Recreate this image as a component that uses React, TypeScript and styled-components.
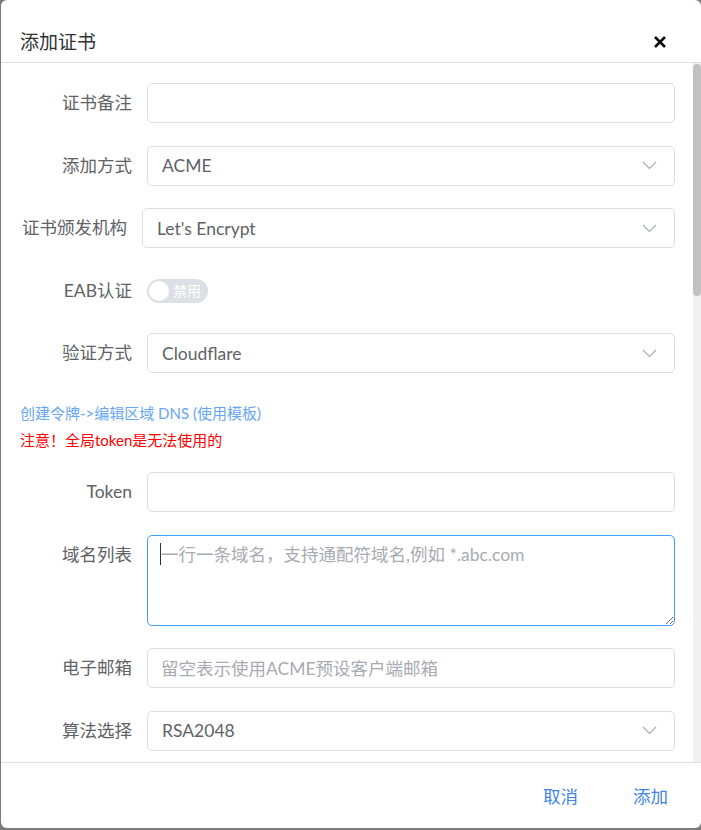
import React from "react";
import styled, { createGlobalStyle } from "styled-components";

const GlobalStyle = createGlobalStyle`
  html, body {
    margin: 0;
    padding: 0;
    background: #7b7b7b;
    font-family: Lato, "Noto Sans CJK SC", sans-serif;
  }
`;

const Dialog = styled.div`
  margin-left: 1px;
  width: 700px;
  height: 828px;
  background: #ffffff;
  border-radius: 6px;
  display: flex;
  flex-direction: column;
  overflow: hidden;
`;

const Header = styled.div`
  height: 63px;
  box-sizing: border-box;
  flex-shrink: 0;
  display: flex;
  align-items: center;
  justify-content: space-between;
  padding: 22px 34px 0 19px;
  border-bottom: 1px solid #dcdfe6;
`;

const Title = styled.span`
  font-size: 19px;
  color: #303133;
  line-height: 24px;
`;

const CloseButton = styled.button`
  border: none;
  background: none;
  padding: 0;
  width: 14px;
  height: 14px;
  display: flex;
  cursor: pointer;
`;

const Body = styled.div`
  flex: 1;
  min-height: 0;
  display: flex;
`;

const Content = styled.div`
  flex: 1;
  min-width: 0;
  overflow: hidden;
  padding: 20px 18px 0 19px;
`;

const ScrollTrack = styled.div`
  width: 8px;
  flex-shrink: 0;
  background: #f1f1f1;
`;

const ScrollThumb = styled.div`
  height: 232px;
  margin-top: 1px;
  border-radius: 4px;
  background: #c1c1c1;
`;

const Row = styled.div`
  display: flex;
  align-items: flex-start;
  margin-bottom: 22.5px;
`;

const Label = styled.label<{ $width?: number }>`
  width: ${(p) => p.$width ?? 127}px;
  flex-shrink: 0;
  box-sizing: border-box;
  padding-right: 15px;
  text-align: right;
  white-space: nowrap;
  font-size: 17.5px;
  line-height: 40px;
  color: #606266;
`;

const Field = styled.div`
  flex: 1;
  min-width: 0;
`;

const Input = styled.input`
  display: block;
  width: 100%;
  height: 40px;
  box-sizing: border-box;
  border: 1px solid #dcdfe6;
  border-radius: 5px;
  padding: 0 13px;
  font-family: inherit;
  font-size: 17.5px;
  color: #606266;
  outline: none;
  &::placeholder {
    color: #a8abb2;
  }
`;

const SelectBox = styled.div`
  height: 40px;
  box-sizing: border-box;
  border: 1px solid #dcdfe6;
  border-radius: 5px;
  padding: 0 17px 0 14px;
  display: flex;
  align-items: center;
  justify-content: space-between;
  font-size: 17.5px;
  color: #606266;
`;

const TextAreaWrap = styled.div`
  position: relative;
  &::before {
    content: "";
    position: absolute;
    left: 13px;
    top: 8px;
    width: 1px;
    height: 22px;
    background: #303133;
  }
`;

const TextArea = styled.textarea`
  display: block;
  width: 100%;
  height: 91px;
  box-sizing: border-box;
  border: 1px solid #409eff;
  border-radius: 5px;
  padding: 6px 13px;
  font-family: inherit;
  font-size: 17.5px;
  line-height: 26px;
  color: #606266;
  outline: none;
  resize: vertical;
  &::placeholder {
    color: #a8abb2;
  }
`;

const SwitchRow = styled.div`
  height: 40px;
  display: flex;
  align-items: center;
`;

const Switch = styled.div<{ $on: boolean }>`
  width: 61px;
  height: 24px;
  box-sizing: border-box;
  border-radius: 12px;
  background: ${(p) => (p.$on ? "#409eff" : "#dcdfe6")};
  display: flex;
  align-items: center;
  padding: 0 2px;
  gap: 4px;
`;

const Knob = styled.span`
  width: 20px;
  height: 20px;
  border-radius: 50%;
  background: #ffffff;
`;

const SwitchText = styled.span`
  font-size: 14px;
  line-height: 20px;
  color: #ffffff;
`;

const Notes = styled.div`
  padding: 4.5px 0 18px;
  font-size: 15px;
  line-height: 27px;
`;

const Note = styled.div<{ $tone: "link" | "warn" }>`
  color: ${(p) => (p.$tone === "link" ? "#66a6f5" : "#ff0000")};
`;

const Footer = styled.div`
  height: 65px;
  flex-shrink: 0;
  border-top: 1px solid #dcdfe6;
  display: flex;
  align-items: center;
  justify-content: flex-end;
  padding-right: 14px;
  gap: 17px;
`;

const TextButton = styled.button`
  border: none;
  background: none;
  padding: 6px 19px;
  font-family: inherit;
  font-size: 17.5px;
  color: #3f84e6;
  cursor: pointer;
`;

const Chevron = () => (
  <svg width="15" height="9" viewBox="0 0 15 9" fill="none">
    <path d="M1 1l6.5 6.5L14 1" stroke="#a8abb2" strokeWidth="1.1" />
  </svg>
);

const Select = ({ value }: { value: string }) => (
  <SelectBox>
    <span>{value}</span>
    <Chevron />
  </SelectBox>
);

const App = () => {
  return (
    <>
      <GlobalStyle />
      <Dialog>
        <Header>
          <Title>添加证书</Title>
          <CloseButton>
            <svg width="14" height="14" viewBox="0 0 14 14">
              <path d="M2 2l10 10M12 2L2 12" stroke="#111" strokeWidth="2.6" />
            </svg>
          </CloseButton>
        </Header>
        <Body>
          <Content>
            <Row>
              <Label>证书备注</Label>
              <Field>
                <Input />
              </Field>
            </Row>
            <Row>
              <Label>添加方式</Label>
              <Field>
                <Select value="ACME" />
              </Field>
            </Row>
            <Row>
              <Label $width={122}>证书颁发机构</Label>
              <Field>
                <Select value="Let's Encrypt" />
              </Field>
            </Row>
            <Row>
              <Label>EAB认证</Label>
              <Field>
                <SwitchRow>
                  <Switch $on={false}>
                    <Knob />
                    <SwitchText>禁用</SwitchText>
                  </Switch>
                </SwitchRow>
              </Field>
            </Row>
            <Row>
              <Label>验证方式</Label>
              <Field>
                <Select value="Cloudflare" />
              </Field>
            </Row>
            <Notes>
              <Note $tone="link">创建令牌-&gt;编辑区域 DNS (使用模板)</Note>
              <Note $tone="warn">注意！全局token是无法使用的</Note>
            </Notes>
            <Row>
              <Label>Token</Label>
              <Field>
                <Input />
              </Field>
            </Row>
            <Row>
              <Label>域名列表</Label>
              <Field>
                <TextAreaWrap>
                  <TextArea placeholder="一行一条域名，支持通配符域名,例如 *.abc.com" />
                </TextAreaWrap>
              </Field>
            </Row>
            <Row>
              <Label>电子邮箱</Label>
              <Field>
                <Input placeholder="留空表示使用ACME预设客户端邮箱" />
              </Field>
            </Row>
            <Row>
              <Label>算法选择</Label>
              <Field>
                <Select value="RSA2048" />
              </Field>
            </Row>
          </Content>
          <ScrollTrack>
            <ScrollThumb />
          </ScrollTrack>
        </Body>
        <Footer>
          <TextButton>取消</TextButton>
          <TextButton>添加</TextButton>
        </Footer>
      </Dialog>
    </>
  );
};

export default App;
